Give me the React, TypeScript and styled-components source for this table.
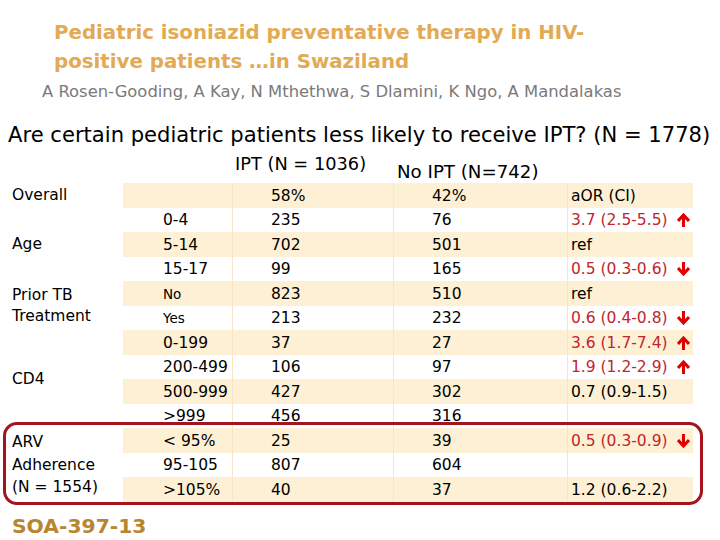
import React from 'react';
import styled, { createGlobalStyle } from 'styled-components';

const GlobalStyle = createGlobalStyle`
  html, body {
    margin: 0;
    padding: 0;
    background: #ffffff;
  }
  body {
    font-family: "DejaVu Sans", "Liberation Sans", Arial, sans-serif;
    color: #000000;
  }
`;

const Page = styled.div`
  position: relative;
  width: 720px;
  height: 540px;
  overflow: hidden;
  background: #ffffff;
`;

const Title = styled.h1`
  margin: 18px 0 0 54px;
  font-size: 19.8px;
  line-height: 29px;
  font-weight: bold;
  color: #e3aa55;
`;

const Authors = styled.div`
  margin: 6px 0 0 42px;
  font-size: 16.4px;
  line-height: 20px;
  color: #7a7a7a;
`;

const Question = styled.div`
  margin: 19px 0 0 8px;
  font-size: 21.1px;
  line-height: 27px;
  white-space: nowrap;
`;

const HeaderRow = styled.div`
  display: grid;
  grid-template-columns: 232px 161px 174px;
  height: 35px;
`;

const HeaderLabel = styled.div<{ $top: number; $indent: number; $size: number }>`
  padding: ${(p) => p.$top}px 0 0 ${(p) => p.$indent}px;
  font-size: ${(p) => p.$size}px;
  line-height: 20px;
  white-space: nowrap;
`;

const Table = styled.div`
  display: flex;
`;

const LabelCol = styled.div`
  display: grid;
  grid-template-rows: repeat(13, 24.5px);
  width: 123px;
`;

const Label = styled.div<{ $span: number }>`
  grid-row: span ${(p) => p.$span};
  display: flex;
  flex-direction: column;
  justify-content: center;
  padding-left: 12px;
  font-size: 15.5px;
  line-height: ${(p) => (p.$span === 3 ? 22.5 : 21)}px;
`;

const DataCol = styled.div`
  display: flex;
  flex-direction: column;
  width: 570px;
`;

const Row = styled.div<{ $shaded: boolean }>`
  display: grid;
  grid-template-columns: 109px 161px 174px 126px;
  height: 24.5px;
  background: ${(p) => (p.$shaded ? '#fdf0d5' : '#ffffff')};
`;

const Cell = styled.div<{ $pad: number; $small?: boolean; $red?: boolean }>`
  display: flex;
  align-items: center;
  gap: 9px;
  padding: 1px 0 0 ${(p) => p.$pad}px;
  font-size: ${(p) => (p.$small ? 13.5 : 15.5)}px;
  color: ${(p) => (p.$red ? '#c0262c' : '#000000')};
  white-space: nowrap;
  & + & {
    border-left: 1px solid #f6e6c6;
  }
`;

const Highlight = styled.div`
  position: absolute;
  left: 3px;
  top: 422px;
  width: 700px;
  height: 83px;
  box-sizing: border-box;
  border: 3px solid #a3141c;
  border-radius: 14px;
  pointer-events: none;
`;

const Code = styled.div`
  margin: 11px 0 0 12px;
  font-size: 20.3px;
  line-height: 26px;
  font-weight: bold;
  color: #b8862e;
`;

type Dir = 'up' | 'down' | undefined;

const Arrow = ({ dir }: { dir: 'up' | 'down' }) => (
  <svg width="13" height="14" viewBox="0 0 13 14" style={{ transform: dir === 'down' ? 'rotate(180deg)' : undefined }}>
    <path d="M6.5 14 V2.5 M1 8 L6.5 2 L12 8" stroke="#e00000" strokeWidth="3" fill="none" />
  </svg>
);

type DataRow = { group: string; ipt: string; no: string; or: string; red?: boolean; dir?: Dir; small?: boolean };

const rows: DataRow[] = [
  { group: '', ipt: '58%', no: '42%', or: 'aOR (CI)' },
  { group: '0-4', ipt: '235', no: '76', or: '3.7 (2.5-5.5)', red: true, dir: 'up' },
  { group: '5-14', ipt: '702', no: '501', or: 'ref' },
  { group: '15-17', ipt: '99', no: '165', or: '0.5 (0.3-0.6)', red: true, dir: 'down' },
  { group: 'No', ipt: '823', no: '510', or: 'ref', small: true },
  { group: 'Yes', ipt: '213', no: '232', or: '0.6 (0.4-0.8)', red: true, dir: 'down', small: true },
  { group: '0-199', ipt: '37', no: '27', or: '3.6 (1.7-7.4)', red: true, dir: 'up' },
  { group: '200-499', ipt: '106', no: '97', or: '1.9 (1.2-2.9)', red: true, dir: 'up' },
  { group: '500-999', ipt: '427', no: '302', or: '0.7 (0.9-1.5)' },
  { group: '>999', ipt: '456', no: '316', or: '' },
  { group: '< 95%', ipt: '25', no: '39', or: '0.5 (0.3-0.9)', red: true, dir: 'down' },
  { group: '95-105', ipt: '807', no: '604', or: '' },
  { group: '>105%', ipt: '40', no: '37', or: '1.2 (0.6-2.2)' },
];

const labels: { lines: string[]; span: number }[] = [
  { lines: ['Overall'], span: 1 },
  { lines: ['Age'], span: 3 },
  { lines: ['Prior TB', 'Treatment'], span: 2 },
  { lines: ['CD4'], span: 4 },
  { lines: ['ARV', 'Adherence', '(N = 1554)'], span: 3 },
];

export default function App() {
  return (
    <Page>
      <GlobalStyle />
      <Title>
        Pediatric isoniazid preventative therapy in HIV-
        <br />
        positive patients …in Swaziland
      </Title>
      <Authors>A Rosen-Gooding, A Kay, N Mthethwa, S Dlamini, K Ngo, A Mandalakas</Authors>
      <Question>Are certain pediatric patients less likely to receive IPT? (N = 1778)</Question>
      <HeaderRow>
        <div />
        <HeaderLabel $top={6} $indent={3} $size={17.8}>IPT (N = 1036)</HeaderLabel>
        <HeaderLabel $top={14} $indent={4} $size={18.2}>No IPT (N=742)</HeaderLabel>
      </HeaderRow>
      <Table>
        <LabelCol>
          {labels.map((l) => (
            <Label key={l.lines[0]} $span={l.span}>
              {l.lines.map((t) => (
                <span key={t}>{t}</span>
              ))}
            </Label>
          ))}
        </LabelCol>
        <DataCol>
          {rows.map((r, i) => (
            <Row key={i} $shaded={i % 2 === 0}>
              <Cell $pad={40} $small={r.small}>{r.group}</Cell>
              <Cell $pad={38}>{r.ipt}</Cell>
              <Cell $pad={38}>{r.no}</Cell>
              <Cell $pad={3} $red={r.red}>
                {r.or}
                {r.dir && <Arrow dir={r.dir} />}
              </Cell>
            </Row>
          ))}
        </DataCol>
      </Table>
      <Highlight />
      <Code>SOA-397-13</Code>
    </Page>
  );
}
